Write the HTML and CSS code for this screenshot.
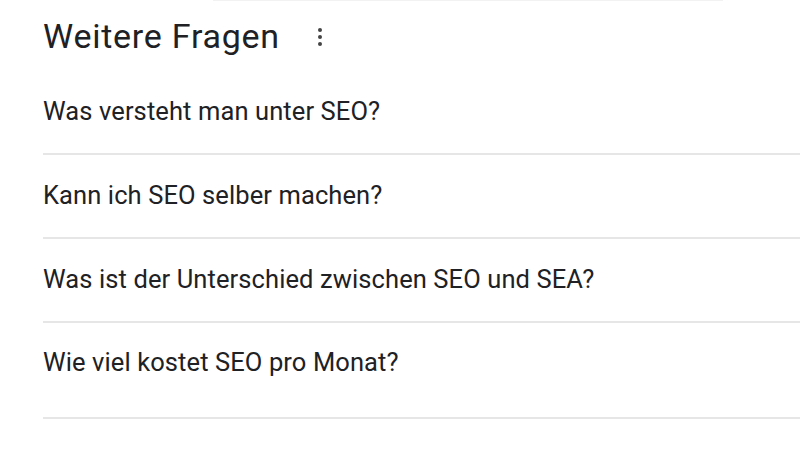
FILE: index.html
```html
<!DOCTYPE html>
<html lang="de">
<head>
    <meta charset="UTF-8">
    <title>Weitere Fragen</title>
    <link rel="stylesheet" href="styles.css">
</head>
<body>
    <div class="related">
        <div class="related_head">
            <h2 class="related_title">Weitere Fragen</h2>
            <div class="kebab">
                <i></i><i></i><i></i>
            </div>
        </div>
        <div class="question">Was versteht man unter SEO?</div>
        <div class="question">Kann ich SEO selber machen?</div>
        <div class="question">Was ist der Unterschied zwischen SEO und SEA?</div>
        <div class="question last">Wie viel kostet SEO pro Monat?</div>
    </div>
</body>
</html>
```

FILE: styles.css
```css
*{
    padding: 0;
    margin: 0;
    box-sizing: border-box;
}
html,body{
    width: 100%;
    height: 100%;
    background-color: #fff;
}
body{
    font-family: Roboto, "Liberation Sans", Arial, sans-serif;
    color: #202124;
}
.related{
    padding-left: 43px;
}
.related_head{
    position: relative;
    display: flex;
    align-items: center;
    height: 71px;
}
/* faint edge of the block above */
.related_head::before{
    content: "";
    position: absolute;
    top: 0;
    left: 170px;
    width: 510px;
    height: 1px;
    background-color: #f2f2f2;
}
.related_title{
    font-size: 34px;
    font-weight: 400;
    line-height: 40px;
    letter-spacing: 0.75px;
}
.kebab{
    display: flex;
    flex-direction: column;
    gap: 3px;
    margin-left: 38px;
    margin-top: 3px;
}
.kebab i{
    width: 4px;
    height: 4px;
    border-radius: 50%;
    background-color: #444;
}
.question{
    font-size: 25.5px;
    line-height: 32px;
    letter-spacing: 0.1px;
    height: 84px;
    padding-top: 24px;
    border-bottom: 2px solid #e6e6e6;
}
.question.last{
    height: 96px;
    padding-top: 23px;
}
```
